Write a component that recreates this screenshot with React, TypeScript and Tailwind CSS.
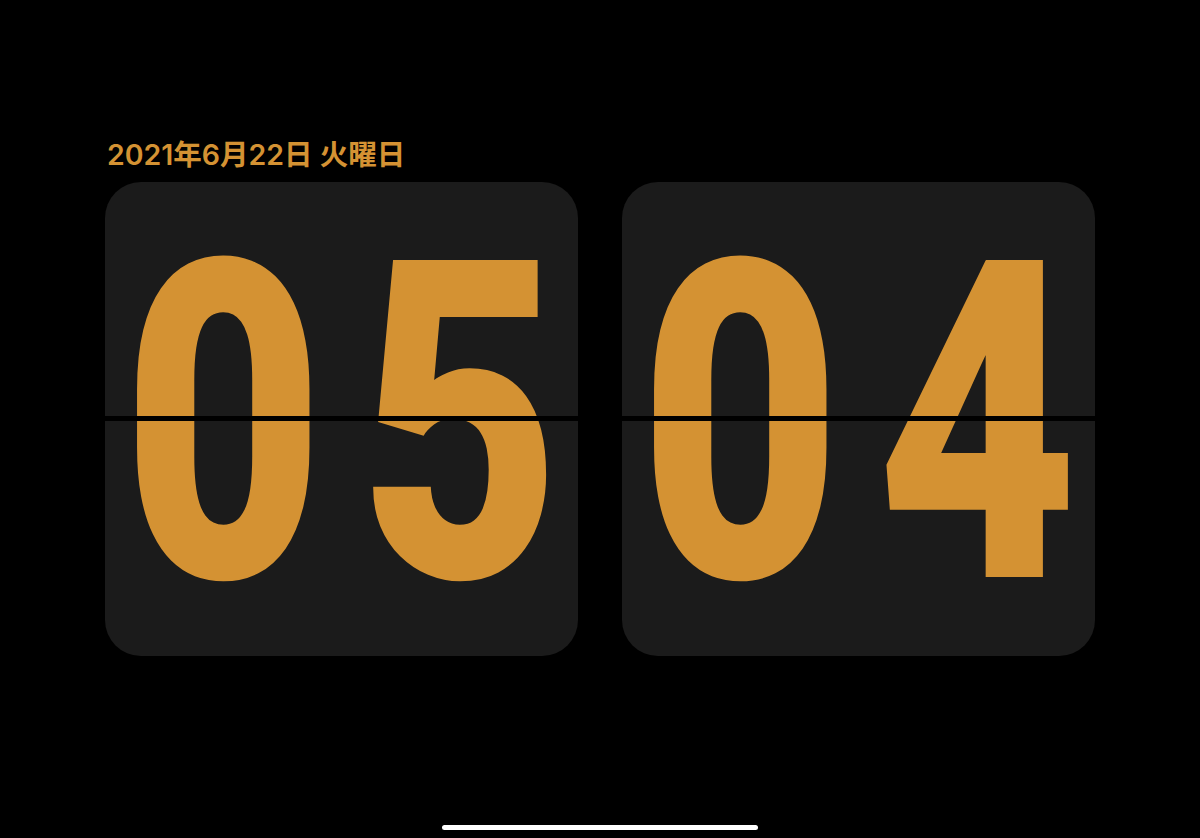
import React from "react";

function Card({ digits }: { digits: string[] }) {
  return (
    <div className="relative w-[473px] h-[474px] rounded-[36px] bg-[#1b1b1b] overflow-hidden">
      <div className="grid grid-cols-2 h-full">
        {digits.map((d, i) => (
          <div key={i} className="flex items-center justify-center h-full">
            <span
              className="block text-[446px] leading-none font-black text-[#d49233] scale-x-[0.78] translate-y-[6px]"
              style={{ fontFamily: "Roboto, 'Liberation Sans', sans-serif" }}
            >
              {d}
            </span>
          </div>
        ))}
      </div>
      <div className="absolute left-0 right-0 top-[234px] h-[5px] bg-black" />
    </div>
  );
}

export default function App() {
  return (
    <div className="w-[1200px] h-[838px] bg-black flex flex-col overflow-hidden">
      <div className="pt-[140px] px-[105px]">
        <div
          className="h-[29px] text-[28.5px] leading-[29px] font-semibold text-[#d49233] pl-[2px]"
          style={{ fontFamily: "Inter, 'Noto Sans CJK JP', sans-serif" }}
        >
          2021年6月22日 火曜日
        </div>
        <div className="mt-[13px] flex gap-[44px]">
          <Card digits={["0", "5"]} />
          <Card digits={["0", "4"]} />
        </div>
      </div>
      <div className="mt-auto mb-[8px] flex justify-center">
        <div className="w-[316px] h-[5px] rounded-full bg-white" />
      </div>
    </div>
  );
}
